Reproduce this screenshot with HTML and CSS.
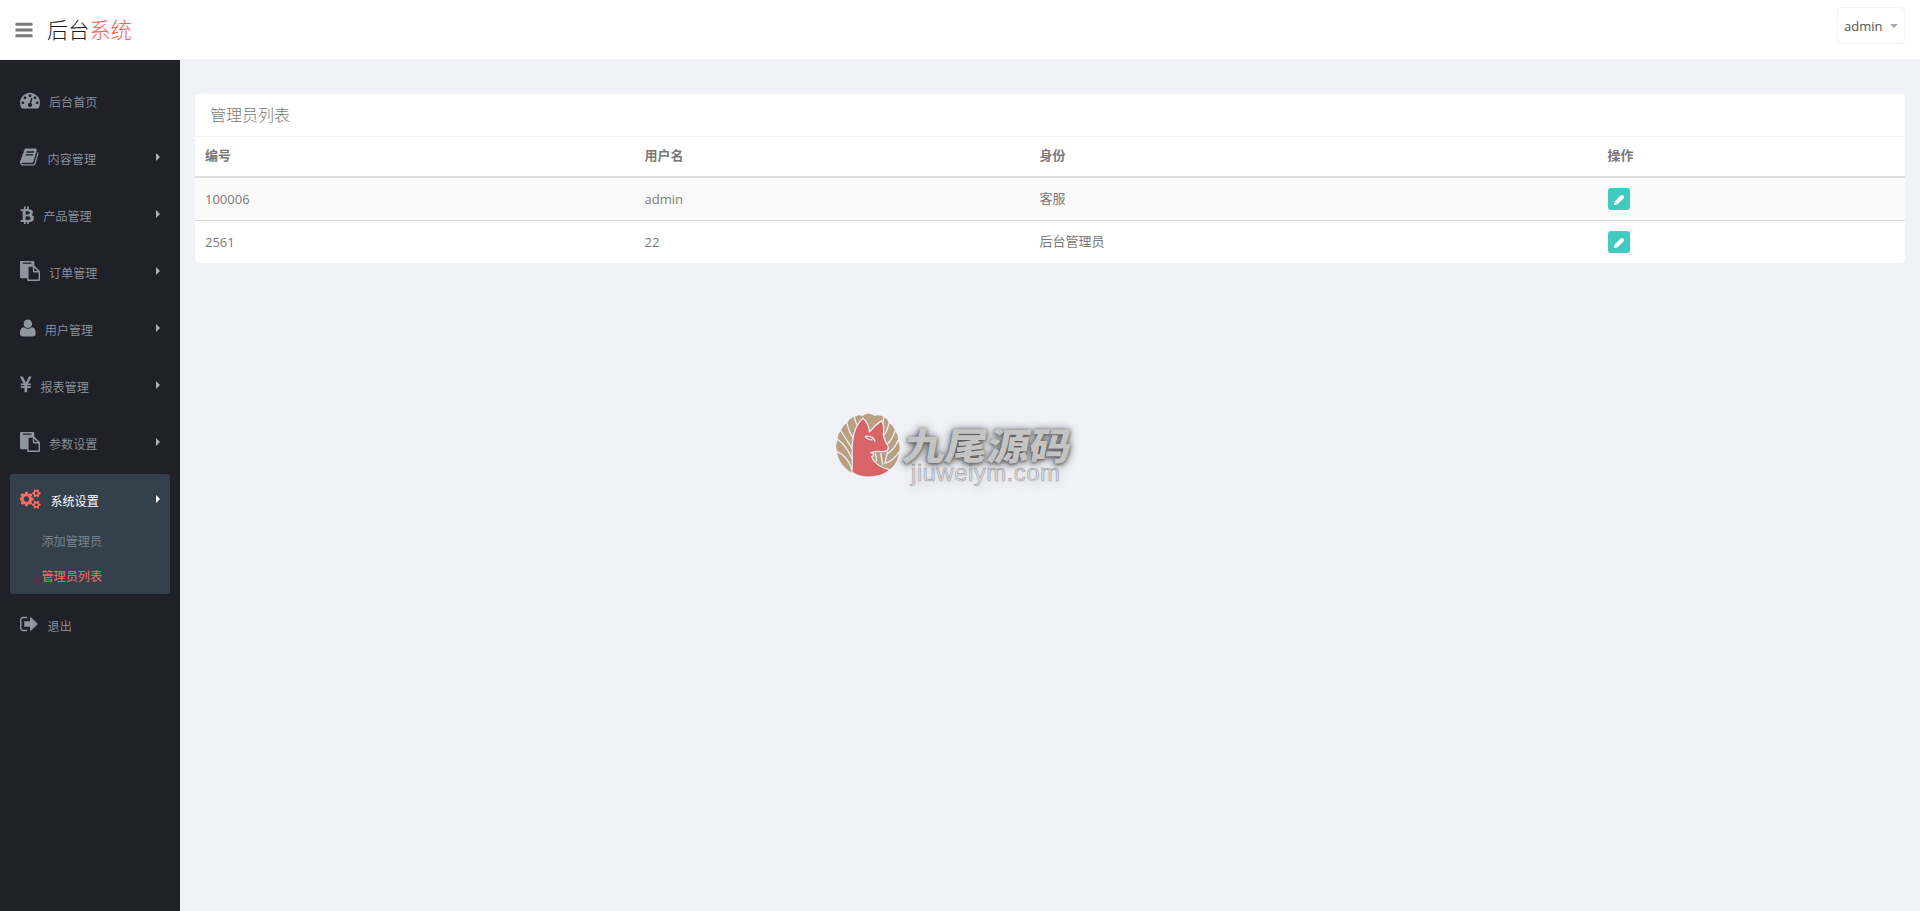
FILE: index.html
```html
<!DOCTYPE html>
<html lang="zh-CN">
<head>
    <meta charset="utf-8">
    <meta name="viewport" content="width=device-width, initial-scale=1.0">
    <title>后台系统</title>
    <link rel="stylesheet" href="styles.css">
</head>
<body>
<!-- icons used more than once -->
<svg class="defs" width="0" height="0">
    <symbol id="icon-paste" viewBox="0 0 1792 1792"><path d="M768 1664h896v-640h-416q-40 0-68-28t-28-68v-416h-384v1152zm256-1440v-64q0-13-9.500-22.500t-22.500-9.500h-704q-13 0-22.500 9.500t-9.500 22.500v64q0 13 9.500 22.500t22.500 9.500h704q13 0 22.500-9.500t9.500-22.500zm256 672h299l-299-299v299zm512 128v672q0 40-28 68t-68 28h-960q-40 0-68-28t-28-68v-160h-544q-40 0-68-28t-28-68v-1344q0-40 28-68t68-28h1088q40 0 68 28t28 68v328q21 13 36 28l408 408q28 28 48 76t20 88z"/></symbol>
    <symbol id="icon-pencil" viewBox="0 0 12 12"><path d="M1 11L1.400 7.800L7.600 1.600Q8.700 .6 9.800 1.200L10.900 2.300Q11.500 3.400 10.500 4.400L4.300 10.600Z"/><path class="nib" d="M2.300 8.300L3.800 9.700"/></symbol>
</svg>

<header class="header">
    <svg class="toggle" viewBox="128 0 1536 1792"><path d="M1664 1344v128q0 26-19 45t-45 19h-1408q-26 0-45-19t-19-45v-128q0-26 19-45t45-19h1408q26 0 45 19t19 45zm0-512v128q0 26-19 45t-45 19h-1408q-26 0-45-19t-19-45v-128q0-26 19-45t45-19h1408q26 0 45 19t19 45zm0-512v128q0 26-19 45t-45 19h-1408q-26 0-45-19t-19-45v-128q0-26 19-45t45-19h1408q26 0 45 19t19 45z"/></svg>
    <a class="logo">后台<span>系统</span></a>
    <a class="user-menu">admin <b class="caret"></b></a>
</header>

<div class="container">
    <aside class="sidebar">
        <ul class="menu">
            <li><a>
                <svg class="icon" width="20" viewBox="0 0 1792 1792"><path d="M384 1152q0-53-37.500-90.500t-90.500-37.500-90.500 37.500-37.500 90.500 37.500 90.500 90.500 37.500 90.500-37.500 37.500-90.500zm192-448q0-53-37.500-90.500t-90.500-37.500-90.500 37.500-37.500 90.500 37.500 90.500 90.500 37.500 90.500-37.500 37.500-90.500zm428 481l101-382q6-26-7.500-48.500t-38.500-29.500-48 6.500-30 39.500l-101 382q-60 5-107 43.500t-63 98.500q-20 77 20 146t117 89 146-20 89-117q16-60-6-117t-72-91zm660-33q0-53-37.500-90.500t-90.500-37.500-90.500 37.500-37.500 90.500 37.500 90.500 90.500 37.500 90.500-37.500 37.500-90.500zm-640-640q0-53-37.500-90.500t-90.500-37.500-90.500 37.500-37.500 90.500 37.500 90.500 90.500 37.500 90.500-37.500 37.500-90.500zm448 192q0-53-37.500-90.500t-90.500-37.500-90.500 37.500-37.500 90.500 37.500 90.500 90.500 37.500 90.500-37.500 37.500-90.500zm320 448q0 261-141 483-19 29-54 29h-1402q-35 0-54-29-141-221-141-483 0-182 71-348t191-286 286-191 348-71 348 71 286 191 191 286 71 348z"/></svg>
                <span>后台首页</span>
            </a></li>
            <li><a>
                <svg class="icon" width="18.600" viewBox="64 0 1664 1792"><path d="M1703 478q40 57 18 129l-275 906q-19 64-76.500 107.500t-122.500 43.500h-923q-77 0-148.500-53.500t-99.500-131.500q-24-67-2-127 0-4 3-27t4-37q1-8-3-21.500t-3-19.500q2-11 8-21t16.500-23.500 16.500-23.500q23-38 45-91.500t30-91.500q3-10 .5-30t-.5-28q3-11 17-28t17-23q21-36 42-92t25-90q1-9-2.500-32t.5-28q4-13 22-30.500t22-22.500q19-26 42.500-84.500t27.500-96.500q1-8-3-25.500t-2-26.500q2-8 9-18t18-23 17-21q8-12 16.500-30.500t15-35 16-36 19.500-32 26.500-23.500 36-11.500 47.500 5.500l-1 3q38-9 51-9h761q74 0 114 56t18 130l-274 906q-36 119-71.500 153.500t-128.500 34.500h-869q-27 0-38 15-11 16-1 43 24 70 144 70h923q29 0 56-15.500t35-41.500l300-987q7-22 5-57 38 15 59 43zm-1064 2q-4 13 2 22.500t20 9.500h608q13 0 25.500-9.500t16.500-22.500l21-64q4-13-2-22.500t-20-9.500h-608q-13 0-25.500 9.500t-16.500 22.500zm-83 256q-4 13 2 22.500t20 9.500h608q13 0 25.500-9.500t16.500-22.500l21-64q4-13-2-22.500t-20-9.500h-608q-13 0-25.500 9.500t-16.500 22.500z"/></svg>
                <span>内容管理</span><i class="arrow"></i>
            </a></li>
            <li><a>
                <svg class="icon" width="14.300" viewBox="256 0 1280 1792"><path d="M1408 725q18 182-131 258 117 28 175 103t45 214q-7 71-32.500 125t-64.500 89-97 58.500-121.500 34.500-145.500 15v255h-154v-251q-80 0-122-1v252h-154v-255q-18 0-54-.5t-55-.5h-200l31-183h111q50 0 58-51v-402h16q-6-1-16-1v-287q-13-68-89-68h-111v-164l212 1q64 0 97-1v-252h154v247q82-2 122-2v-245h154v252q79 7 140 22.500t113 45 82.500 78 36.500 114.500zm-215 545q0-36-15-64t-37-46-57.500-30.500-65.500-18.500-74-9-69-3-64.500 1-47.500 1v338q8 0 37 .5t48 .5 53-1.500 58.500-4 57-8.500 55.500-14 47.500-21 39.500-30 24.500-40 9.500-51zm-71-476q0-33-12.500-58.500t-30.500-42-48-28-55-16.500-61.500-8-58-2.500-54 1-39.500.5v307q5 0 34.500.5t46.500 0 50-2 55-5.500 51.500-11 48.500-18.500 37-27 27-38.500 9-51z"/></svg>
                <span>产品管理</span><i class="arrow"></i>
            </a></li>
            <li><a>
                <svg class="icon" width="20"><use href="#icon-paste"/></svg>
                <span>订单管理</span><i class="arrow"></i>
            </a></li>
            <li><a>
                <svg class="icon" width="15.700" viewBox="0 0 1408 1792"><path transform="matrix(1 0 0 -1 0 1536)" d="M1408 131q0-120-73-189.500t-194-69.500h-874q-121 0-194 69.500t-73 189.500q0 53 3.500 103.500t14 109t26.500 108.500t43 97.500t62 81t85.500 53.500t111.500 20q9 0 42-21.500t74.500-48t108-48t133.500-21.500t133.500 21.500t108 48t74.500 48t42 21.500q61 0 111.500-20t85.500-53.500t62-81t43-97.500t26.500-108.500t14-109t3.500-103.500zM1088 1024q0-159-112.500-271.500t-271.500-112.500t-271.500 112.500t-112.500 271.500t112.500 271.500t271.500 112.500t271.500-112.500t112.500-271.500z"/></svg>
                <span>用户管理</span><i class="arrow"></i>
            </a></li>
            <li><a>
                <svg class="icon" width="11.500" viewBox="382 0 1027 1792"><path d="M985.500 1536h-172q-13 0-22.500-9t-9.500-23v-330h-288q-13 0-22.500-9t-9.500-23v-103q0-13 9.500-22.500t22.500-9.500h288v-85h-288q-13 0-22.500-9t-9.500-23v-104q0-13 9.500-22.500t22.500-9.500h214l-321-578q-8-16 0-32 10-16 28-16h194q19 0 29 18l215 425q19 38 56 125 10-24 30.500-68t27.500-61l191-420q8-19 29-19h191q17 0 27 16 9 14 1 31l-313 579h215q13 0 22.500 9.500t9.500 22.500v104q0 14-9.500 23t-22.500 9h-290v85h290q13 0 22.500 9.500t9.500 22.500v103q0 14-9.500 23t-22.500 9h-290v330q0 13-9.500 22.500t-22.500 9.500z"/></svg>
                <span>报表管理</span><i class="arrow"></i>
            </a></li>
            <li><a>
                <svg class="icon" width="20"><use href="#icon-paste"/></svg>
                <span>参数设置</span><i class="arrow"></i>
            </a></li>
            <li class="active">
                <a>
                    <svg class="icon" width="21.400" viewBox="0 0 1920 1792"><path d="M832 896q0-106-75-181t-181-75-181 75-75 181 75 181 181 75 181-75 75-181zm768 512q0-52-38-90t-90-38-90 38-38 90q0 53 37.500 90.500t90.500 37.500 90.500-37.500 37.500-90.500zm0-1024q0-52-38-90t-90-38-90 38-38 90q0 53 37.500 90.500t90.500 37.500 90.500-37.500 37.500-90.500zm-384 421v185q0 10-7 19.500t-16 10.500l-155 24q-11 35-32 76 34 48 90 115 7 11 7 20 0 12-7 19-23 30-82.500 89.500t-78.500 59.500q-11 0-21-7l-115-90q-37 19-77 31-11 108-23 155-7 24-30 24h-186q-11 0-20-7.500t-10-17.500l-23-153q-34-10-75-31l-118 89q-7 7-20 7-11 0-21-8-144-133-144-160 0-9 7-19 10-14 41-53t47-61q-23-44-35-82l-152-24q-10-1-17-9.500t-7-19.500v-185q0-10 7-19.500t16-10.500l155-24q11-35 32-76-34-48-90-115-7-11-7-20 0-12 7-20 22-30 82-89t79-59q11 0 21 7l115 90q34-18 77-32 11-108 23-154 7-24 30-24h186q11 0 20 7.500t10 17.500l23 153q34 10 75 31l118-89q8-7 20-7 11 0 21 8 144 133 144 160 0 8-7 19-12 16-42 54t-45 60q23 48 34 82l152 23q10 2 17 10.500t7 19.500zm640 533v140q0 16-149 31-12 27-30 52 51 113 51 138 0 4-4 7-122 71-124 71-8 0-46-47t-52-68q-20 2-30 2t-30-2q-14 21-52 68t-46 47q-2 0-124-71-4-3-4-7 0-25 51-138-18-25-30-52-149-15-149-31v-140q0-16 149-31 13-29 30-52-51-113-51-138 0-4 4-7 4-2 35-20t59-34 30-16q8 0 46 46.500t52 67.500q20-2 30-2t30 2q51-71 92-112l6-2q4 0 124 70 4 3 4 7 0 25-51 138 17 23 30 52 149 15 149 31zm0-1024v140q0 16-149 31-12 27-30 52 51 113 51 138 0 4-4 7-122 71-124 71-8 0-46-47t-52-68q-20 2-30 2t-30-2q-14 21-52 68t-46 47q-2 0-124-71-4-3-4-7 0-25 51-138-18-25-30-52-149-15-149-31v-140q0-16 149-31 13-29 30-52-51-113-51-138 0-4 4-7 4-2 35-20t59-34 30-16q8 0 46 46.500t52 67.500q20-2 30-2t30 2q51-71 92-112l6-2q4 0 124 70 4 3 4 7 0 25-51 138 17 23 30 52 149 15 149 31z"/></svg>
                    <span>系统设置</span><i class="arrow"></i>
                </a>
                <ul class="sub">
                    <li>添加管理员</li>
                    <li class="current">管理员列表</li>
                </ul>
            </li>
            <li><a>
                <svg class="icon" width="18.600" viewBox="64 0 1664 1792"><path d="M704 1440q0 4 1 20t.5 26.500-3 23.500-10 19.500-20.500 6.500h-320q-119 0-203.500-84.500t-84.500-203.500v-704q0-119 84.500-203.500t203.500-84.500h320q13 0 22.500 9.500t9.500 22.500q0 4 1 20t.5 26.500-3 23.500-10 19.500-20.500 6.500h-320q-66 0-113 47t-47 113v704q0 66 47 113t113 47h312l11.500 1 11.500 3 8 5.500 7 9 2 13.500zm928-544q0 26-19 45l-544 544q-19 19-45 19t-45-19-19-45v-288h-448q-26 0-45-19t-19-45v-384q0-26 19-45t45-19h448v-288q0-26 19-45t45-19 45 19l544 544q19 19 19 45z"/></svg>
                <span>退出</span>
            </a></li>
        </ul>
    </aside>

    <main class="main-content">
        <section class="panel">
            <h3 class="panel-heading">管理员列表</h3>
            <table class="table">
                <thead>
                    <tr>
                        <th class="col-id">编号</th>
                        <th class="col-name">用户名</th>
                        <th class="col-role">身份</th>
                        <th>操作</th>
                    </tr>
                </thead>
                <tbody>
                    <tr>
                        <td>100006</td>
                        <td>admin</td>
                        <td class="role">客服</td>
                        <td><button class="btn"><svg><use href="#icon-pencil"/></svg></button></td>
                    </tr>
                    <tr>
                        <td>2561</td>
                        <td>22</td>
                        <td class="role">后台管理员</td>
                        <td><button class="btn"><svg><use href="#icon-pencil"/></svg></button></td>
                    </tr>
                </tbody>
            </table>
        </section>
    </main>
</div>

<div class="watermark">
    <svg class="fox" viewBox="0 0 64 64">
        <path class="tails" d="M32 .5Q36 1 38 3Q43 1 47 4Q51 6 52 10Q57 12 58 18Q62 22 61 27Q64 33 62 38Q61 49 54 55Q45 63 32 63Q18 63 10 55Q2 48 1 38Q-1 31 2 26Q1 21 5 18Q6 12 11 10Q13 5 18 4Q22 1 26 3Q28 1 32 .5Z"/>
        <path class="feather" d="M16 56Q11 42 1 38M16 45Q10 32 2 26M16 35Q10 26 5 18M18 26Q12 18 11 10M22 14Q19 9 18 4M45 14Q47 9 47 4M47 22Q51 17 52 10M50 31Q55 27 58 18M51 40Q58 35 61 27M48 50Q58 46 62 38M39 39L40 48M44 39L46 51M51 38L48 50"/>
        <path class="body" d="M15.500 58C17 48 15 36 16.500 27Q18 13 26.500 5Q32 10 33 18.500Q38 12 45 7.500Q48 14 46.500 21Q48 28 51 32Q53 37 47 38Q40 37 34.500 39Q40 41 35 43Q38 52 53 56Q45 63 32 63Q22 63 15.500 58Z"/>
        <path class="eye" d="M28.500 23Q37 22 38.500 28.500M28.500 23Q32 27 36 26.500"/>
    </svg>
    <div class="wm-text">
        <div class="wm-name">九尾源码</div>
        <div class="wm-site">jiuweiym.com</div>
    </div>
</div>
</body>
</html>
```
FILE: styles.css
```css
* {
    box-sizing: border-box;
}

body {
    margin: 0;
    background: #f1f2f7;
    color: #797979;
    font-family: "Open Sans", "Noto Sans CJK SC", sans-serif;
    font-size: 13px;
}

ul {
    margin: 0;
    padding: 0;
    list-style: none;
}

svg {
    fill: currentColor;
}

.defs {
    position: absolute;
}

/* header */
.header {
    display: flex;
    align-items: center;
    height: 60px;
    padding: 0 15px;
    background: #fff;
    border-bottom: 1px solid #f1f2f7;
}

.toggle {
    width: 18px;
    height: 20px;
}

.logo {
    margin: 0 0 0 14px;
    color: #1c1c1c;
    font-size: 21.2px;
    font-weight: 300;
    line-height: 30px;
}

.logo span {
    color: #ff5a4d;
}

.user-menu {
    display: flex;
    align-items: center;
    justify-content: space-between;
    width: 68px;
    height: 37px;
    margin: 0 0 8px auto;
    padding: 0 6px;
    border: 1px solid #f1f2f7;
    border-radius: 4px;
    color: #555;
}

.caret {
    border: 4px solid transparent;
    border-top-color: #a4aaba;
    border-bottom: 0;
}

/* sidebar */
.container {
    display: flex;
    height: 851px;
}

.sidebar {
    width: 180px;
    padding: 15px 10px;
    background: #202029;
}

.menu > li {
    margin-bottom: 8px;
    border-radius: 4px;
}

.menu > li:last-child {
    margin-top: -3px;
}

.menu a {
    display: flex;
    height: 49px;
    padding: 15px 10px 0;
    color: #8f969e;
    font-size: 12.1px;
    font-weight: 350;
    line-height: 20px;
}

.icon {
    height: 20px;
    margin-right: 9px;
}

.menu a span {
    margin-top: 3px;
}

.arrow {
    margin: 6px 0 0 auto;
    width: 4px;
    height: 8px;
    border: 4px solid transparent;
    border-left-color: #aeb2b7;
    border-right: 0;
}

.menu .active {
    background: #35404d;
}

.menu .active a {
    color: #fff;
    font-weight: 400;
}

.active .icon {
    color: #ff6c60;
}

.active .arrow {
    border-left-color: #fff;
}

.sub {
    height: 71px;
    padding-top: 1px;
    color: #7d8790;
    font-size: 12.1px;
    font-weight: 350;
}

.sub li {
    padding-left: 31.5px;
    line-height: 35px;
}

.sub .current {
    color: #ff6c60;
    font-weight: 400;
}

/* content */
.main-content {
    flex: 1;
    padding: 34px 15px;
}

.panel {
    overflow: hidden;
    background: #fff;
    border-radius: 4px;
}

.panel-heading {
    height: 43px;
    margin: 0;
    padding-left: 15px;
    border-bottom: 1px solid #eff2f7;
    font-size: 16px;
    font-weight: 300;
    line-height: 42px;
}

.table {
    width: 100%;
    border-collapse: separate;
    border-spacing: 0;
    table-layout: fixed;
}

.table th,
.table td {
    padding: 0 10px;
    text-align: left;
}

.table th {
    height: 41px;
    padding-bottom: 4px;
    border-bottom: 2px solid #ddd;
}

.table td {
    height: 42px;
}

.table .role {
    padding-bottom: 3px;
}

.table tbody tr:first-child td {
    height: 43px;
    background: #f9f9f9;
    border-bottom: 1px solid #ddd;
}

.col-id {
    width: 439.5px;
}

.col-name {
    width: 395px;
}

.col-role {
    width: 568px;
}

.btn {
    display: flex;
    align-items: center;
    justify-content: center;
    width: 22px;
    height: 22px;
    padding: 1px 0 0;
    border: 0;
    border-radius: 3px;
    background: #41cac0;
    color: #fff;
}

.btn svg {
    width: 12px;
    height: 12px;
}

.nib {
    fill: none;
    stroke: #41cac0;
    stroke-width: 0.6;
}

/* watermark laid over the page */
.watermark {
    position: absolute;
    left: 836px;
    top: 413px;
    display: flex;
}

.fox {
    width: 65px;
    height: 65px;
}

.tails {
    fill: #b9a083;
}

.feather {
    fill: none;
    stroke: #f1f2f7;
    stroke-width: 1.2;
}

.body {
    fill: #d96468;
    stroke: #f1f2f7;
    stroke-width: 1.2;
}

.eye {
    fill: none;
    stroke: #f1f2f7;
    stroke-width: 1.2;
}

.wm-text {
    margin: 14px 0 0 3px;
}

.wm-name {
    color: #c4c4c4;
    font-size: 42px;
    font-weight: 900;
    line-height: 38px;
    white-space: nowrap;
    transform: skewX(-10deg) scaleY(0.9);
    text-shadow: 0 1px 4px #555, 0 1px 10px #555;
}

.wm-site {
    margin: -5px 0 0 7px;
    color: #dcdce0;
    font-family: "Liberation Sans", sans-serif;
    font-size: 24px;
    letter-spacing: 0.45px;
    line-height: 26px;
    -webkit-text-stroke: 0.6px #a2a2a4;
    text-shadow: 1px 3px 8px #ccc;
}
```
